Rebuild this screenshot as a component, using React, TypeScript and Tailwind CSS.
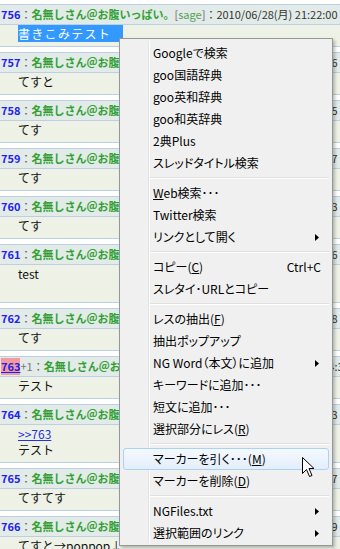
import type { ReactNode } from 'react';

type PostData = {
  no: string;
  time: string;
  body: ReactNode;
  marked?: boolean;
};

const posts: PostData[] = [
  { no: '756', time: '21:22:00', body: <span className="bg-[#3399ff] pr-[12px] tracking-[1.3px] text-white">書きこみテスト</span> },
  { no: '757', time: '21:22:46', body: 'てすと' },
  { no: '758', time: '21:23:05', body: 'てす' },
  { no: '759', time: '21:23:17', body: 'てす' },
  { no: '760', time: '21:23:33', body: 'てす' },
  { no: '761', time: '21:24:06', body: <>test<br />&nbsp;</> },
  { no: '762', time: '21:24:18', body: 'てす' },
  { no: '763', time: '21:24:38', body: 'テスト', marked: true },
  {
    no: '764',
    time: '21:25:03',
    body: (
      <>
        <span className="text-[#2233dd] underline">&gt;&gt;763</span>
        <br />
        テスト
      </>
    ),
  },
  { no: '765', time: '21:25:17', body: 'てすてす' },
  { no: '766', time: '21:25:29', body: <>てすと→poppop↓</> },
];

function Post({ p }: { p: PostData }) {
  return (
    <div className="mb-[5px]">
      <div className="flex h-[21px] items-center overflow-hidden whitespace-nowrap border-y border-[#bccfe3] bg-[#e2ebe8] pl-[1px] text-[11px]">
        {p.marked ? (
          <>
            <span className="bg-[#f59a9a] font-bold text-[#2222ee] underline">{p.no}</span>
            <span className="text-[#777]">+1</span>
          </>
        ) : (
          <span className="font-bold text-[#2222ee]">{p.no}</span>
        )}
        <span className="text-[#555]">：</span>
        <span className="font-bold text-[#33a035]">名無しさん＠お腹いっぱい。</span>
        <span className="text-[#666]">
          [<span className="text-[#5a9e5a]">sage</span>]
        </span>
        <span className="text-[#333]">：2010/06/28(月) {p.time}</span>
      </div>
      <div className="border-b border-[#bccfe3] bg-[#eef2e6] pb-[4px] pl-[18px] pt-[1px] text-[12px] leading-[16px] text-[#111]">
        {p.body}
      </div>
    </div>
  );
}

type Item =
  | { sep: true }
  | { sep?: false; label: ReactNode; sub?: boolean; key?: string; hover?: boolean };

const U = ({ c }: { c: string }) => <span className="underline">{c}</span>;

const items: Item[] = [
  { label: 'Googleで検索' },
  { label: 'goo国語辞典' },
  { label: 'goo英和辞典' },
  { label: 'goo和英辞典' },
  { label: '2典Plus' },
  { label: 'スレッドタイトル検索' },
  { sep: true },
  { label: <><U c="W" />eb検索･･･</> },
  { label: 'Twitter検索' },
  { label: 'リンクとして開く', sub: true },
  { sep: true },
  { label: <>コピー(<U c="C" />)</>, key: 'Ctrl+C' },
  { label: 'スレタイ･URLとコピー' },
  { sep: true },
  { label: <>レスの抽出(<U c="F" />)</> },
  { label: '抽出ポップアップ' },
  { label: 'NG Word（本文）に追加', sub: true },
  { label: 'キーワードに追加･･･' },
  { label: '短文に追加･･･' },
  { label: <>選択部分にレス(<U c="R" />)</> },
  { sep: true },
  { label: <>マーカーを引く･･･(<U c="M" />)</>, hover: true },
  { label: <>マーカーを削除(<U c="D" />)</> },
  { sep: true },
  { label: 'NGFiles.txt', sub: true },
  { label: '選択範囲のリンク', sub: true },
];

function Arrow() {
  return (
    <svg width="4" height="7" viewBox="0 0 4 7" className="absolute right-[10px] top-[8px]">
      <path d="M0 0 L4 3.5 L0 7 Z" fill="#000" />
    </svg>
  );
}

function ContextMenu() {
  return (
    <div className="absolute left-[119px] top-[38px] flex w-[214px] flex-col border border-[#979797] bg-[#f0f0f0] pb-[1px] pt-[3px] text-[12px] text-black shadow-[2px_2px_3px_rgba(0,0,0,0.25)] [font-feature-settings:'palt']">
      <div className="absolute bottom-[2px] left-[28px] top-[2px] w-[2px] border-l border-[#e2e3e3] bg-white" />
      {items.map((it, i) =>
        it.sep ? (
          <div key={i} className="flex h-[8px] items-center pl-[30px] pr-[3px]">
            <div className="h-[2px] w-full border-t border-[#e0e0e0] bg-white" />
          </div>
        ) : (
          <div key={i} className="relative mx-[3px] h-[22px]">
            {it.hover && (
              <div className="absolute inset-0 rounded-[3px] border border-[#a9d3f6] bg-gradient-to-b from-[#f4f9fe] to-[#e3eefb]" />
            )}
            <div className="relative flex h-full items-center pl-[30px] pr-[8px]">
              <span className="flex-1 whitespace-nowrap">{it.label}</span>
              {it.key && <span className="whitespace-nowrap">{it.key}</span>}
            </div>
            {it.sub && <Arrow />}
          </div>
        ),
      )}
    </div>
  );
}

function Cursor() {
  return (
    <svg width="13" height="21" viewBox="0 0 13 21" className="absolute left-[302px] top-[457px]">
      <path
        d="M0.5 0.5 L0.5 16.5 L4.5 12.5 L7.5 19.5 L10 18.5 L7 11.5 L12 11.5 Z"
        fill="#fff"
        stroke="#000"
        strokeWidth="1"
        strokeLinejoin="round"
      />
    </svg>
  );
}

export default function App() {
  return (
    <div className="relative h-[549px] w-[340px] overflow-hidden bg-white font-['Noto_Sans_CJK_JP','Noto_Sans',sans-serif]">
      <div className="pt-[4px]">
        {posts.map((p) => (
          <Post key={p.no} p={p} />
        ))}
      </div>
      <ContextMenu />
      <Cursor />
    </div>
  );
}
